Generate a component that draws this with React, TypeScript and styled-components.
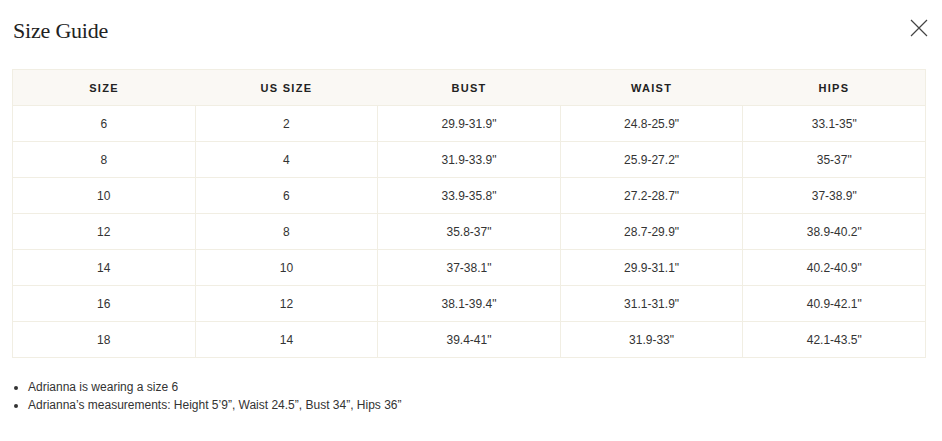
import React from "react";
import styled, { createGlobalStyle } from "styled-components";

const GlobalStyle = createGlobalStyle`
  html, body {
    margin: 0;
    padding: 0;
    background: #fff;
  }
  body {
    font-family: "Liberation Sans", Arial, sans-serif;
    color: #333;
  }
`;

const Modal = styled.div`
  width: 942px;
  padding: 0 16px 0 12px;
  box-sizing: border-box;
`;

const Header = styled.div`
  display: flex;
  align-items: center;
  justify-content: space-between;
  height: 62px;
  padding-top: 0;
`;

const Title = styled.h2`
  margin: 0 0 0 1px;
  font-family: "Liberation Serif", "Times New Roman", serif;
  font-weight: 400;
  font-size: 22px;
  color: #222;
  letter-spacing: -0.2px;
`;

const CloseButton = styled.button`
  border: 0;
  background: none;
  padding: 0;
  width: 18px;
  height: 18px;
  margin-right: -2px;
  margin-bottom: 7px;
  cursor: pointer;
  display: flex;
`;

const Table = styled.table`
  margin-top: 7px;
  width: 914px;
  border-collapse: collapse;
  table-layout: fixed;
  border: 1px solid #f1eee3;
`;

const HeadCell = styled.th`
  height: 35px;
  padding: 0;
  background: #faf8f4;
  font-size: 11px;
  font-weight: 700;
  letter-spacing: 1.3px;
  color: #222;
  text-align: center;
`;

const Cell = styled.td`
  height: 35px;
  padding: 0;
  border: 1px solid #f1eee3;
  font-size: 12px;
  color: #333;
  text-align: center;
`;

const Notes = styled.ul`
  margin: 20px 0 0;
  padding-left: 16px;
  font-size: 12px;
  line-height: 18px;
  color: #333;
`;

const columns = ["Size", "US Size", "Bust", "Waist", "Hips"];

const rows = [
  ["6", "2", "29.9-31.9\"", "24.8-25.9\"", "33.1-35\""],
  ["8", "4", "31.9-33.9\"", "25.9-27.2\"", "35-37\""],
  ["10", "6", "33.9-35.8\"", "27.2-28.7\"", "37-38.9\""],
  ["12", "8", "35.8-37\"", "28.7-29.9\"", "38.9-40.2\""],
  ["14", "10", "37-38.1\"", "29.9-31.1\"", "40.2-40.9\""],
  ["16", "12", "38.1-39.4\"", "31.1-31.9\"", "40.9-42.1\""],
  ["18", "14", "39.4-41\"", "31.9-33\"", "42.1-43.5\""],
];

function App() {
  return (
    <>
      <GlobalStyle />
      <Modal>
        <Header>
          <Title>Size Guide</Title>
          <CloseButton aria-label="Close">
            <svg width="18" height="18" viewBox="0 0 18 18">
              <path
                d="M1 1L17 17M17 1L1 17"
                stroke="#444"
                strokeWidth="1.2"
                fill="none"
              />
            </svg>
          </CloseButton>
        </Header>
        <Table>
          <thead>
            <tr>
              {columns.map((c) => (
                <HeadCell key={c}>{c.toUpperCase()}</HeadCell>
              ))}
            </tr>
          </thead>
          <tbody>
            {rows.map((r) => (
              <tr key={r[0]}>
                {r.map((v, i) => (
                  <Cell key={i}>{v}</Cell>
                ))}
              </tr>
            ))}
          </tbody>
        </Table>
        <Notes>
          <li>Adrianna is wearing a size 6</li>
          <li>Adrianna’s measurements: Height 5’9”, Waist 24.5”, Bust 34”, Hips 36”</li>
        </Notes>
      </Modal>
    </>
  );
}

export default App;
